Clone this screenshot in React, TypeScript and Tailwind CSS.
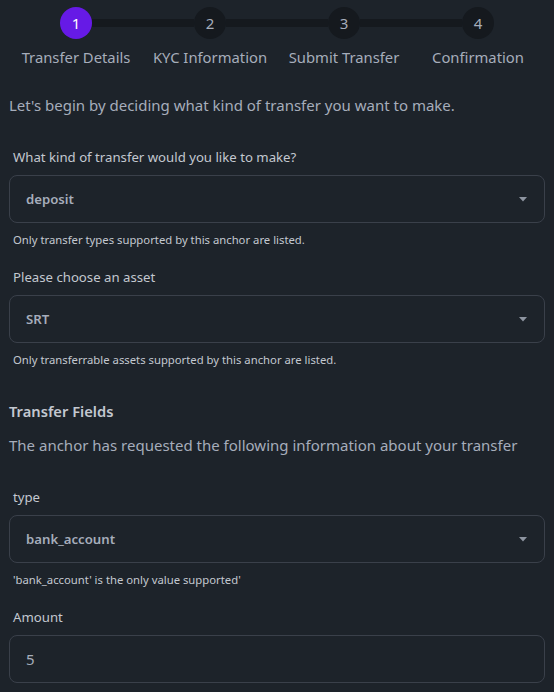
import React from "react";

const steps = ["Transfer Details", "KYC Information", "Submit Transfer", "Confirmation"];

function Caret() {
  return (
    <svg width="8" height="5" viewBox="0 0 8 5" className="shrink-0">
      <path d="M0 0 L8 0 L4 4.5 Z" fill="#8e95a1" />
    </svg>
  );
}

function SelectBox({ value }: { value: string }) {
  return (
    <div className="flex h-[48px] items-center justify-between rounded-lg border border-[#3a404a] pl-4 pr-[17px]">
      <span className="text-[13.2px] font-semibold leading-5 text-[#a6adbb]">{value}</span>
      <Caret />
    </div>
  );
}

function Label({ children }: { children: React.ReactNode }) {
  return <div className="px-1 text-[13.2px] leading-5 text-[#c3c8d0]">{children}</div>;
}

function Helper({ children }: { children: React.ReactNode }) {
  return <div className="mt-[9px] px-1 text-[11.3px] leading-4 text-[#c3c8d0]">{children}</div>;
}

export default function App() {
  return (
    <div
      className="min-h-screen bg-[#1d232a] px-[9px] pb-4"
      style={{ fontFamily: '"Noto Sans", "Open Sans", sans-serif' }}
    >
      <div className="grid grid-cols-4 pt-[7px]">
        {steps.map((s, i) => (
          <div key={s} className="flex flex-col items-center">
            <div className="flex w-full items-center">
              <div className={`h-2 flex-1 ${i === 0 ? "" : "bg-[#15191e]"}`} />
              <div
                className={`flex h-8 w-8 items-center justify-center rounded-full text-[15px] ${
                  i === 0 ? "bg-[#661ae6] text-white" : "bg-[#15191e] text-[#a6adbb]"
                }`}
              >
                {i + 1}
              </div>
              <div className={`h-2 flex-1 ${i === 3 ? "" : "bg-[#15191e]"}`} />
            </div>
            <div className="mt-[6px] text-[14.8px] leading-6 text-[#a6adbb]">{s}</div>
          </div>
        ))}
      </div>

      <p className="mt-6 text-[15px] leading-6 text-[#a6adbb]">
        Let's begin by deciding what kind of transfer you want to make.
      </p>

      <div className="mt-[30px]">
        <Label>What kind of transfer would you like to make?</Label>
        <div className="mt-2">
          <SelectBox value="deposit" />
        </div>
        <Helper>Only transfer types supported by this anchor are listed.</Helper>
      </div>

      <div className="mt-[19px]">
        <Label>Please choose an asset</Label>
        <div className="mt-2">
          <SelectBox value="SRT" />
        </div>
        <Helper>Only transferrable assets supported by this anchor are listed.</Helper>
      </div>

      <div className="mt-[31px] text-[14.7px] font-semibold leading-6 text-[#c3c8d0]">Transfer Fields</div>
      <p className="mt-[10px] text-[15px] leading-6 text-[#a6adbb]">
        The anchor has requested the following information about your transfer
      </p>

      <div className="mt-[30px]">
        <Label>type</Label>
        <div className="mt-2">
          <SelectBox value="bank_account" />
        </div>
        <Helper>'bank_account' is the only value supported'</Helper>
      </div>

      <div className="mt-[19px]">
        <Label>Amount</Label>
        <div className="mt-2 flex h-[48px] items-center rounded-lg border border-[#3a404a] px-4 text-[15px] text-[#a6adbb]">
          5
        </div>
      </div>
    </div>
  );
}
